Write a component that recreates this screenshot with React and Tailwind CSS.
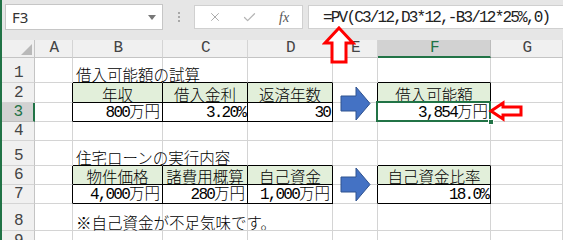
import React from 'react';
import { X, Check } from 'lucide-react';

const COLS = ['A', 'B', 'C', 'D', 'E', 'F', 'G'];
const ROWS = [1, 2, 3, 4, 5, 6, 7, 8, 9];

const CELLS = {
  B1: { t: '借入可能額の試算', a: 'l' },
  B2: { t: '年収', a: 'c' },
  C2: { t: '借入金利', a: 'c' },
  D2: { t: '返済年数', a: 'c' },
  F2: { t: '借入可能額', a: 'c' },
  B3: { t: '800万円', a: 'r' },
  C3: { t: '3.20%', a: 'r' },
  D3: { t: '30', a: 'r' },
  F3: { t: '3,854万円', a: 'r' },
  B5: { t: '住宅ローンの実行内容', a: 'l' },
  B6: { t: '物件価格', a: 'c' },
  C6: { t: '諸費用概算', a: 'c' },
  D6: { t: '自己資金', a: 'c' },
  F6: { t: '自己資金比率', a: 'c' },
  B7: { t: '4,000万円', a: 'r' },
  C7: { t: '280万円', a: 'r' },
  D7: { t: '1,000万円', a: 'r' },
  F7: { t: '18.0%', a: 'r' },
  B8: { t: '※自己資金が不足気味です。', a: 'l' },
};

const TABLE = new Set(['B2', 'C2', 'D2', 'F2', 'B3', 'C3', 'D3', 'F3', 'B6', 'C6', 'D6', 'F6', 'B7', 'C7', 'D7', 'F7']);
const HEAD = new Set(['B2', 'C2', 'D2', 'F2', 'B6', 'C6', 'D6', 'F6']);

// half-width runs in a mono face, the rest in the CJK face
function Txt({ s }) {
  return (
    <span className="inline-flex items-baseline whitespace-pre">
      {String(s)
        .split(/([\x20-\x7E]+)/)
        .filter(Boolean)
        .map((p, i) =>
          /^[\x20-\x7E]+$/.test(p) ? (
            <span key={i} className="leading-[15px] font-['Liberation_Mono',monospace] text-[16px] tracking-[-1.8px]">{p}</span>
          ) : (
            <span key={i} className="leading-[15px] font-['Noto_Sans_CJK_JP',sans-serif] font-light">{p}</span>
          )
        )}
    </span>
  );
}

function Cell({ col, row }) {
  const id = col + row;
  const ci = COLS.indexOf(col);
  const right = ci < COLS.length - 1 ? COLS[ci + 1] + row : '';
  const below = col + (row + 1);
  const cell = CELLS[id];
  const br = TABLE.has(id) || TABLE.has(right) ? 'border-r-black' : 'border-r-[#d4d4d4]';
  const bb = TABLE.has(id) || TABLE.has(below) ? 'border-b-black' : 'border-b-[#d4d4d4]';
  const align = !cell ? '' : cell.a === 'l' ? 'justify-start pl-[3px]' : cell.a === 'r' ? 'justify-end pr-[2px]' : 'justify-center';
  return (
    <div
      className={`relative flex items-end border-r border-b ${br} ${bb} ${align} ${
        HEAD.has(id) ? 'bg-[#e2efda]' : ''
      } whitespace-nowrap text-[15.5px] text-black`}
    >
      {cell && <Txt s={cell.t} />}
      {id === 'F3' && (
        <>
          <div className="absolute left-[-2px] top-[-2px] right-[-1px] bottom-[-1px] border-2 border-[#217346] z-10" />
          <div className="absolute right-[-4px] bottom-[-4px] w-[6px] h-[6px] bg-[#217346] border border-white z-20" />
        </>
      )}
    </div>
  );
}

function BlueArrow({ top }) {
  return (
    <svg className={`absolute left-[336px] ${top} z-10`} width="36" height="40" viewBox="0 0 36 40">
      <polygon points="3,12 18,12 18,3 32,19.5 18,36 18,27 3,27" fill="#4472c4" stroke="#2f528f" strokeWidth="1" />
    </svg>
  );
}

export default function App() {
  return (
    <div className="relative flex w-[563px] h-[240px] overflow-hidden bg-white">
      <div className="w-[2px] shrink-0 bg-[#217346]" />
      <div className="flex-1 flex flex-col min-h-0">
        {/* formula bar */}
        <div className="h-[40px] shrink-0 bg-[#e6e6e6] flex items-start pt-[4px]">
          <div className="ml-[3px] w-[158px] h-[26px] bg-white border border-[#c6c6c6] flex items-center justify-between pl-[6px] pr-[6px]">
            <span className="font-['Noto_Sans',sans-serif] text-[15px] text-[#333]">F3</span>
            <svg width="8" height="5" viewBox="0 0 8 5">
              <polygon points="0,0 8,0 4,5" fill="#777" />
            </svg>
          </div>
          <div className="w-[31px] h-[26px] flex flex-col items-center justify-center gap-[2px]">
            <div className="w-[2px] h-[2px] bg-[#a8a8a8]" />
            <div className="w-[2px] h-[2px] bg-[#a8a8a8]" />
            <div className="w-[2px] h-[2px] bg-[#a8a8a8]" />
          </div>
          <div className="mt-[1px] w-[109px] h-[24px] bg-white border border-[#d0d0d0] flex items-center pl-[13px]">
            <X size={14} strokeWidth={1.5} className="text-[#a0a0a0]" />
            <Check size={15} strokeWidth={2} className="text-[#b5b5b5] ml-[20px]" />
            <span className="ml-[22px] font-['Liberation_Serif',serif] italic text-[14px] text-[#555]">fx</span>
          </div>
          <div className="mt-[1px] ml-[5px] flex-1 h-[24px] bg-white border border-[#d0d0d0] border-r-0 flex items-center pl-[14px]">
            <span className="text-[15.5px] text-[#222]">
              <Txt s="=PV(C3/12,D3*12,-B3/12*25%,0)" />
            </span>
          </div>
        </div>

        {/* sheet */}
        <div className="relative shrink-0 grid grid-cols-[33px_38px_90px_85px_85px_45px_113px_72px] grid-rows-[18px_25px_20px_19px_19px_25px_19px_19px_27px_20px]">
          <div className="relative bg-[#f0f0f0] border-r border-b border-[#c4c4c4]">
            <svg className="absolute right-[2px] bottom-[2px]" width="11" height="11" viewBox="0 0 11 11">
              <polygon points="11,0 11,11 0,11" fill="#b9b9b9" />
            </svg>
          </div>
          {COLS.map((c) => (
            <div
              key={c}
              className={`flex items-center justify-center text-[15px] border-r ${
                c === 'F'
                  ? 'bg-[#d2d2d2] text-[#217346] border-b-2 border-b-[#217346] border-r-[#bcbcbc]'
                  : 'bg-[#f0f0f0] text-[#444] border-b border-b-[#c4c4c4] border-r-[#d4d4d4]'
              }`}
            >
              <Txt s={c} />
            </div>
          ))}
          {ROWS.map((r) => (
            <React.Fragment key={r}>
              <div
                className={`flex items-end justify-center pb-[1px] text-[15px] border-b ${
                  r === 3
                    ? 'bg-[#d2d2d2] text-[#217346] border-r-2 border-r-[#217346] border-b-[#bcbcbc]'
                    : 'bg-[#f0f0f0] text-[#444] border-r border-r-[#c4c4c4] border-b-[#d4d4d4]'
                }`}
              >
                <Txt s={r} />
              </div>
              {COLS.map((c) => (
                <Cell key={c} col={c} row={r} />
              ))}
            </React.Fragment>
          ))}
          <BlueArrow top="top-[44px]" />
          <BlueArrow top="top-[125px]" />
        </div>
      </div>

      {/* red callout arrows */}
      <svg className="absolute left-[322px] top-[25px] z-30" width="34" height="40" viewBox="0 0 34 40">
        <polygon points="17,3 31,18 24,18 24,37 10,37 10,18 3,18" fill="#fff" stroke="#ff0000" strokeWidth="3" strokeLinejoin="miter" />
      </svg>
      <svg className="absolute left-[488px] top-[100px] z-30" width="36" height="22" viewBox="0 0 36 22">
        <polygon points="3,11 15,3 15,7 33,7 33,15 15,15 15,19" fill="#fff" stroke="#ff0000" strokeWidth="3" strokeLinejoin="miter" />
      </svg>
    </div>
  );
}
